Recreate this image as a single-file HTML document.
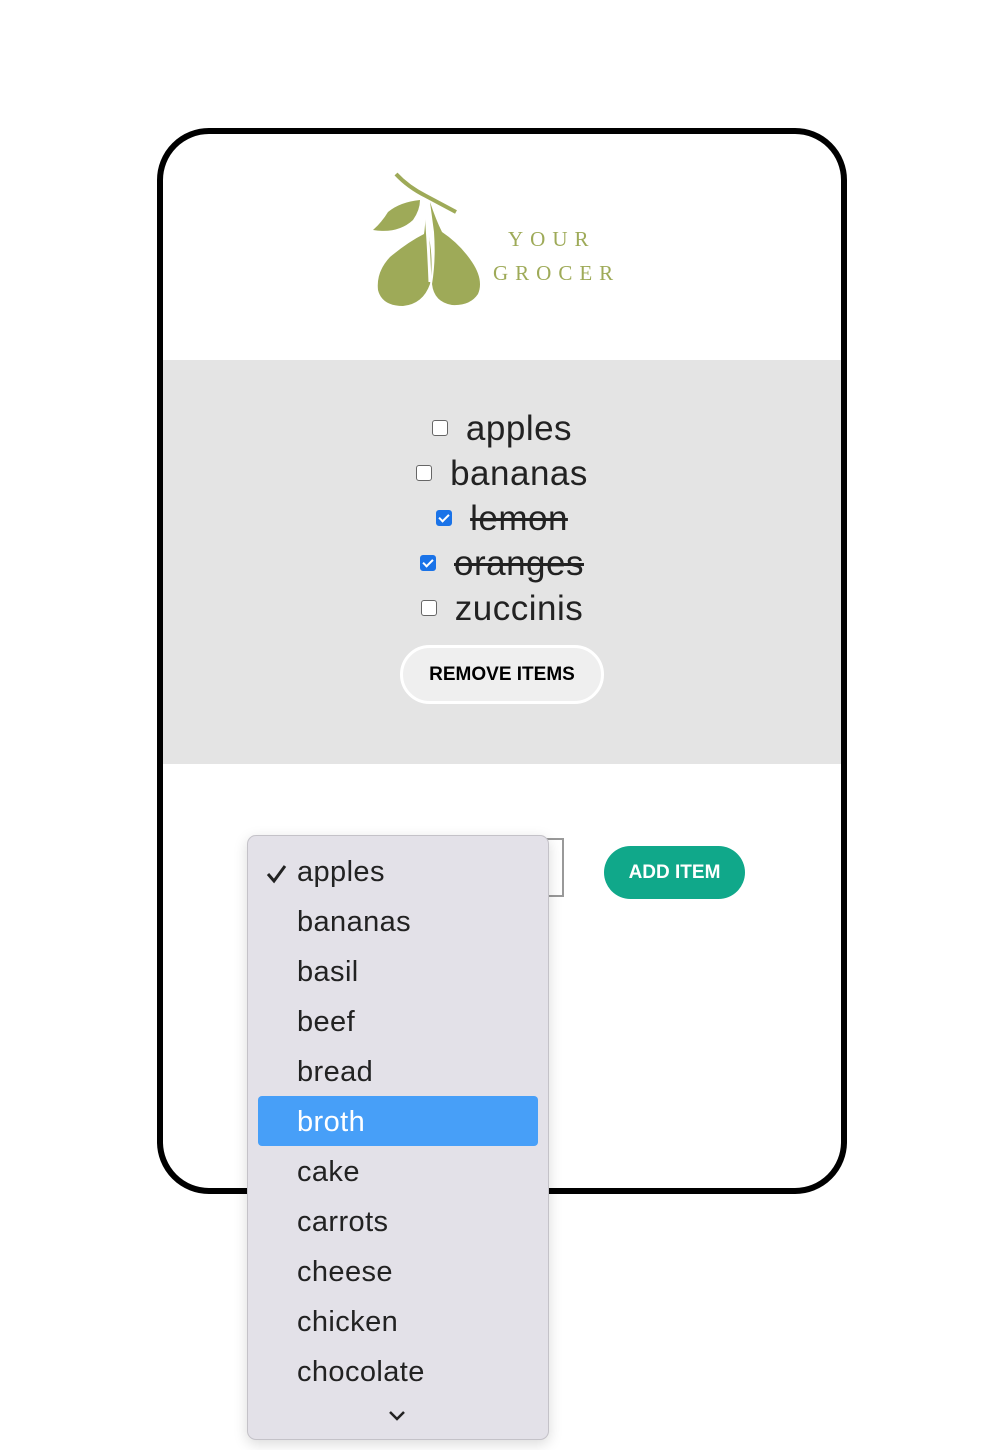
<!DOCTYPE html>
<html><head><style>
body{margin:0;width:1008px;height:1450px;background:#fff;font-family:"Liberation Sans",sans-serif;position:relative;overflow:hidden}
.card{position:absolute;left:157px;top:128px;width:678px;height:1054px;border:6px solid #000;border-radius:52px;overflow:hidden;background:#fff}
.band{position:absolute;left:0;top:226px;width:100%;height:404px;background:#e4e4e4}
.item{position:absolute;left:0;width:100%;text-align:center;font-size:35px;color:#222;height:45px;line-height:45px;letter-spacing:0.5px}
.item span{display:inline-block}
.cb{display:inline-block;width:14px;height:14px;border:1.5px solid #666;border-radius:3px;background:#fff;vertical-align:middle;margin-right:18px;position:relative;top:-3px}
.cb.on{background:#1a73e8;border-color:#1a73e8}
.cb.on:after{content:"";position:absolute;left:4px;top:1px;width:4px;height:8px;border:solid #fff;border-width:0 2px 2px 0;transform:rotate(45deg)}
.rm{position:absolute;left:237px;top:511px;width:198px;height:53px;border:3px solid #fff;border-radius:30px;background:#efefef;font-weight:bold;font-size:19px;line-height:53px;text-align:center;color:#000}
.add{position:absolute;left:604px;top:846px;width:141px;height:53px;border-radius:27px;background:#10a88a;color:#fff;font-weight:bold;font-size:19px;line-height:53px;text-align:center}
.sel{position:absolute;left:500px;top:838px;width:60px;height:55px;border:2px solid #999;background:#fff}
.dd{position:absolute;left:247px;top:835px;width:300px;height:603px;background:#e3e1e8;border:1px solid #c4c2c8;border-radius:9px;box-shadow:0 4px 14px rgba(0,0,0,.15)}
.o{position:absolute;left:49px;font-size:29px;color:#222;height:50px;line-height:50px;letter-spacing:0.4px}
.hl{position:absolute;left:10px;top:260px;width:280px;height:50px;background:#479ff8;border-radius:4px}
</style></head><body>
<div class="card">
<svg style="position:absolute;left:205px;top:38px" width="260" height="150" viewBox="0 0 260 150">
<g fill="#9eaa58">
<path d="M28 2 Q40 15 58 24 L88 40" stroke="#9eaa58" stroke-width="4" fill="none"/>
<path d="M52 28 Q32 30 20 40 Q14 50 5 58 Q30 62 45 48 Q52 38 52 28Z"/>
<path d="M57 30 Q58 50 56 62 Q40 70 22 85 Q8 100 10 118 Q14 134 35 134 Q55 132 62 112 Q66 88 60 60Z"/>
<path d="M62 30 Q68 48 74 60 Q92 72 104 90 Q116 108 110 122 Q102 134 84 133 Q66 130 64 112 Q68 88 66 60Z"/>
</g>
<path d="M57 30 Q60 60 62 110" stroke="#fff" stroke-width="3" fill="none"/>
<text x="140" y="74" font-family="Liberation Serif,serif" font-size="21" letter-spacing="7" fill="#9eaa58">YOUR</text>
<text x="125" y="108" font-family="Liberation Serif,serif" font-size="21" letter-spacing="7" fill="#9eaa58">GROCER</text>
</svg>
<div class="band">
<div class="item" style="top:46px"><span><i class="cb"></i>apples</span></div>
<div class="item" style="top:91px"><span><i class="cb"></i>bananas</span></div>
<div class="item" style="top:136px"><span><i class="cb on"></i><s>lemon</s></span></div>
<div class="item" style="top:181px"><span><i class="cb on"></i><s>oranges</s></span></div>
<div class="item" style="top:226px"><span><i class="cb"></i>zuccinis</span></div>
</div>
<div class="rm">REMOVE ITEMS</div>
</div>
<div class="sel"></div>
<div class="add">ADD ITEM</div>
<div class="dd">
<div class="hl"></div>
<svg style="position:absolute;left:18px;top:28px" width="22" height="20"><path d="M2 10 L8 17 L19 2" stroke="#222" stroke-width="3" fill="none"/></svg>
<div class="o" style="top:11px">apples</div>
<div class="o" style="top:61px">bananas</div>
<div class="o" style="top:111px">basil</div>
<div class="o" style="top:161px">beef</div>
<div class="o" style="top:211px">bread</div>
<div class="o" style="top:261px;color:#fff">broth</div>
<div class="o" style="top:311px">cake</div>
<div class="o" style="top:361px">carrots</div>
<div class="o" style="top:411px">cheese</div>
<div class="o" style="top:461px">chicken</div>
<div class="o" style="top:511px">chocolate</div>
<svg style="position:absolute;left:140px;top:574px" width="18" height="12"><path d="M2 2 L9 9 L16 2" stroke="#222" stroke-width="2.5" fill="none"/></svg>
</div>
</body></html>
